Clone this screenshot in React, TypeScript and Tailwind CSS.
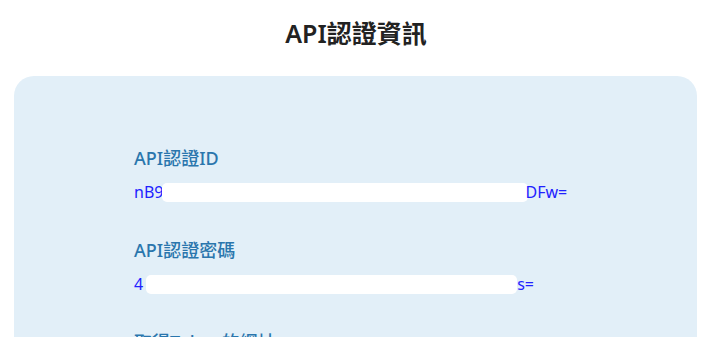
const font = { fontFamily: '"Noto Sans", "Noto Sans CJK TC", sans-serif' };

interface FieldProps {
  label: string;
  head: string;
  tail: string;
  maskWidth: string;
  maskGap: string;
}

function Field({ label, head, tail, maskWidth, maskGap }: FieldProps) {
  return (
    <div className="flex flex-col">
      <div className="text-[18px] leading-[24px] font-medium text-[#2a76ad]">{label}</div>
      <div className="mt-[10px] text-[16px] leading-[24px] text-[#2121ff] whitespace-nowrap flex items-center">
        <span>{head}</span>
        {/* redacted part of the secret */}
        <span className={`inline-block h-[19px] rounded-[5px] bg-white ${maskWidth} ${maskGap}`} />
        <span>{tail}</span>
      </div>
    </div>
  );
}

export default function App() {
  return (
    <div className="w-[712px] h-[337px] overflow-hidden bg-white pt-[15px]" style={font}>
      <h1 className="text-center text-[25px] leading-[36px] font-semibold text-[#222]">API認證資訊</h1>

      <div className="mt-[25px] ml-[14px] w-[683px] h-[400px] rounded-[20px] bg-[#e2eff8] pt-[70px] px-[120px] flex flex-col gap-[34px]">
        <Field label="API認證ID" head="nB9" tail="DFw=" maskWidth="w-[366px]" maskGap="-ml-px -mr-[3px]" />
        <Field label="API認證密碼" head="4" tail="s=" maskWidth="w-[371px]" maskGap="ml-[3px]" />
        <Field label="取得Token的網址" head="https://" tail="" maskWidth="w-0" maskGap="ml-0" />
      </div>
    </div>
  );
}
